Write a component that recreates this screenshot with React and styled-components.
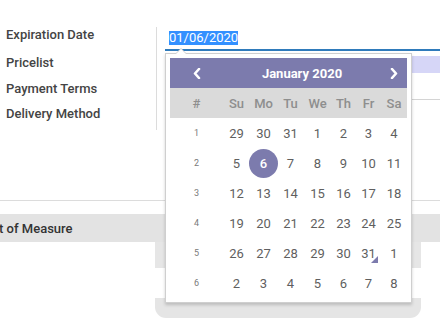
import React from "react";
import styled, { createGlobalStyle } from "styled-components";

const GlobalStyle = createGlobalStyle`
  html, body { margin: 0; padding: 0; background: #fff; }
  body { font-family: Roboto, "Liberation Sans", sans-serif; }
`;

const PURPLE = "#7c7bad";

const weeks = [
  [29, 30, 31, 1, 2, 3, 4],
  [5, 6, 7, 8, 9, 10, 11],
  [12, 13, 14, 15, 16, 17, 18],
  [19, 20, 21, 22, 23, 24, 25],
  [26, 27, 28, 29, 30, 31, 1],
  [2, 3, 4, 5, 6, 7, 8],
];
const dayNames = ["Su", "Mo", "Tu", "We", "Th", "Fr", "Sa"];

function Chevron({ dir }) {
  const pts = dir === "left" ? "6,1 2,5.5 6,10" : "2,1 6,5.5 2,10";
  return (
    <svg width="8" height="11" viewBox="0 0 8 11">
      <polyline points={pts} fill="none" stroke="#fff" strokeWidth="2.6" strokeLinecap="round" strokeLinejoin="round" />
    </svg>
  );
}

export default function App() {
  return (
    <Page>
      <GlobalStyle />
      <Group>
        <LabelCol>
          <Label $mt={0}>Expiration Date</Label>
          <Label $mt={12}>Pricelist</Label>
          <Label $mt={10}>Payment Terms</Label>
          <Label $mt={9}>Delivery Method</Label>
        </LabelCol>
        <FieldCol>
          <DateInput>
            <Selected>01/06/2020</Selected>
          </DateInput>
          <Pricelist />
          <Field />
        </FieldCol>
      </Group>
      <Divider />
      <TableHead>
        <HeadCell>Unit of Measure</HeadCell>
      </TableHead>
      <Ghost />
      <Pill />

      <Picker>
        <Cal>
          <NavCell>
            <Chevron dir="left" />
          </NavCell>
          <Title>January 2020</Title>
          <NavCell>
            <Chevron dir="right" />
          </NavCell>
          <Dow>#</Dow>
          {dayNames.map((d) => (
            <Dow key={d}>{d}</Dow>
          ))}
          {weeks.map((w, i) => (
            <React.Fragment key={i}>
              <WeekNo>{i + 1}</WeekNo>
              {w.map((d, j) => (
                <Day key={j} $today={i === 4 && j === 5}>
                  <DayNum $active={i === 1 && j === 1}>{d}</DayNum>
                </Day>
              ))}
            </React.Fragment>
          ))}
        </Cal>
      </Picker>
    </Page>
  );
}

const Page = styled.div`
  position: relative;
  width: 440px;
  height: 324px;
  overflow: hidden;
  padding-top: 27px;
  box-sizing: border-box;
`;

const Group = styled.div`
  display: flex;
  height: 103px;
`;

const LabelCol = styled.div`
  width: 157px;
  box-sizing: border-box;
  border-right: 1px solid #dcdcdc;
  padding-left: 6px;
  display: flex;
  flex-direction: column;
`;

const Label = styled.div`
  margin-top: ${(p) => p.$mt}px;
  font-size: 13px;
  line-height: 16px;
  font-weight: 500;
  color: #444;
  white-space: nowrap;
`;

const FieldCol = styled.div`
  flex: 1;
  padding-left: 8px;
  display: flex;
  flex-direction: column;
`;

const DateInput = styled.div`
  padding: 4px 0 4px 4px;
  height: 14px;
  border-bottom: 2px solid #2f7bbb;
  font-size: 13px;
  line-height: 14px;
`;

const Selected = styled.span`
  display: inline-block;
  height: 14px;
  background: #3390ff;
  color: #fff;
`;

const Pricelist = styled.div`
  margin-top: 5px;
  height: 17px;
  background: #d6d6f7;
`;

const Field = styled.div`
  height: 26px;
  border-bottom: 1px solid #d4d4d4;
`;

const Divider = styled.div`
  margin-top: 70px;
  border-top: 1px solid #dcdcdc;
`;

const TableHead = styled.div`
  margin-top: 13px;
  height: 28px;
  background: #e3e3e3;
  display: flex;
  align-items: center;
  overflow: hidden;
`;

const HeadCell = styled.div`
  margin-left: -20px;
  font-size: 13px;
  font-weight: 500;
  color: #333;
  white-space: nowrap;
`;

const Ghost = styled.div`
  margin-left: 155px;
  width: 266px;
  height: 26px;
  background: #e6e6e6;
`;

const Pill = styled.div`
  margin: 30px 0 0 155px;
  width: 266px;
  height: 20px;
  background: #e5e5e5;
  border-radius: 0 0 11px 11px;
`;

const Picker = styled.div`
  position: absolute;
  left: 165px;
  top: 53px;
  width: 237px;
  padding: 4px;
  background: #fff;
  border: 1px solid #cfcfcf;
  box-shadow: 0 2px 3px rgba(0, 0, 0, 0.18);

  &::before {
    content: "";
    position: absolute;
    top: -6px;
    left: 9px;
    border-left: 6px solid transparent;
    border-right: 6px solid transparent;
    border-bottom: 6px solid #cfcfcf;
  }
  &::after {
    content: "";
    position: absolute;
    top: -5px;
    left: 10px;
    border-left: 5px solid transparent;
    border-right: 5px solid transparent;
    border-bottom: 5px solid #fff;
  }
`;

const Cal = styled.div`
  display: grid;
  grid-template-columns: 53px 27px 27px 27px 27px 25px 25px 26px;
  grid-auto-rows: 30px;
  font-size: 13px;
`;

const NavCell = styled.div`
  background: ${PURPLE};
  display: flex;
  align-items: center;
  justify-content: center;
`;

const Title = styled.div`
  grid-column: span 6;
  background: ${PURPLE};
  color: #fff;
  font-weight: 700;
  font-size: 13px;
  display: flex;
  align-items: center;
  justify-content: center;
`;

const Dow = styled.div`
  background: #dadada;
  color: #8e8e8e;
  font-weight: 500;
  display: flex;
  align-items: center;
  justify-content: center;
`;

const WeekNo = styled.div`
  font-size: 9px;
  color: #7a7a7a;
  display: flex;
  align-items: center;
  justify-content: center;
`;

const Day = styled.div`
  position: relative;
  display: flex;
  align-items: center;
  justify-content: center;
  color: #5f5f5f;

  ${(p) =>
    p.$today &&
    `
    &::after {
      content: "";
      position: absolute;
      right: 3px;
      bottom: 5px;
      border-left: 7px solid transparent;
      border-bottom: 7px solid ${PURPLE};
    }
  `}
`;

const DayNum = styled.span`
  flex: none;
  width: 29px;
  height: 29px;
  border-radius: 50%;
  display: flex;
  align-items: center;
  justify-content: center;
  background: ${(p) => (p.$active ? PURPLE : "transparent")};
  color: ${(p) => (p.$active ? "#fff" : "inherit")};
  font-weight: ${(p) => (p.$active ? 500 : 400)};
`;
